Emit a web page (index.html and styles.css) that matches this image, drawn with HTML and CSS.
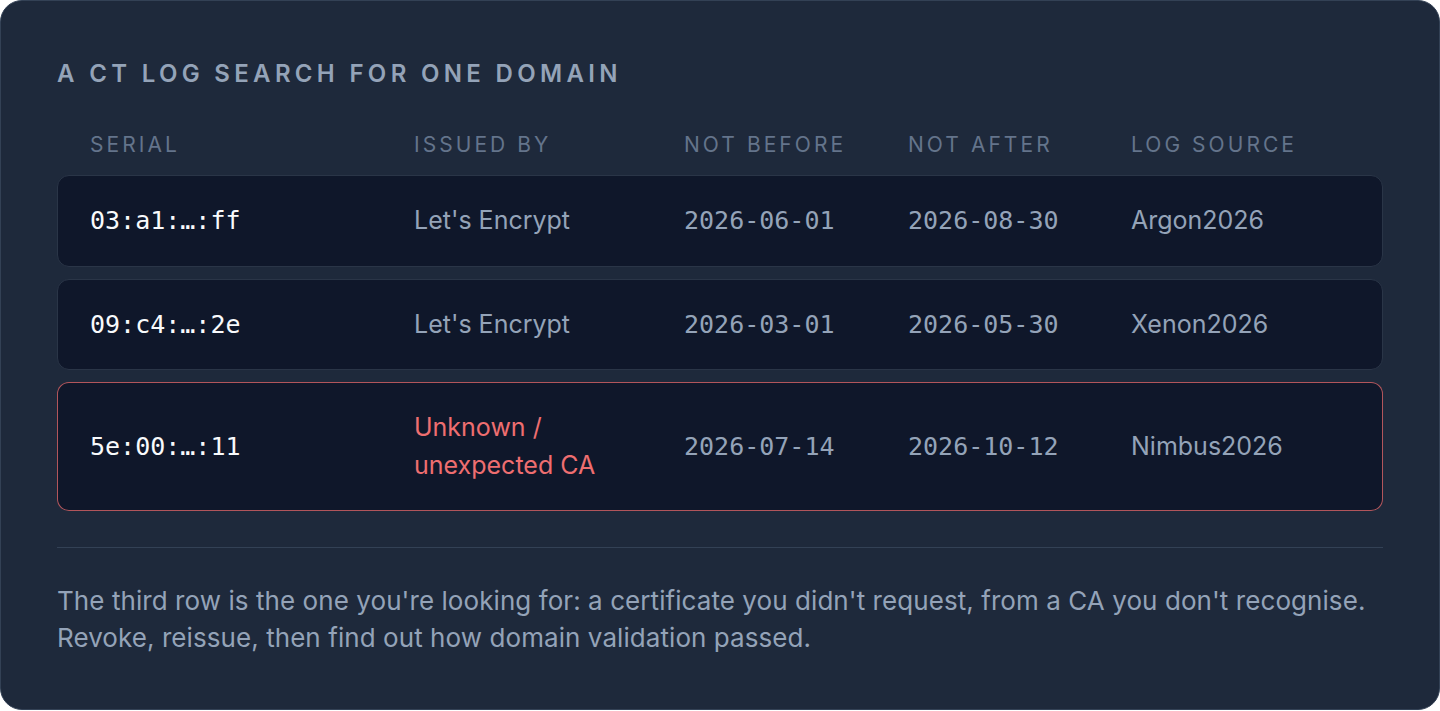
FILE: index.html
```html
<!DOCTYPE html>
<html>
<head>
  <meta charset="UTF-8">
  <title>CT log search</title>
  <link rel="stylesheet" href="styles.css">
</head>
<body>
  <div class="card">
    <h2 class="title">A CT log search for one domain</h2>

    <div class="table">
      <div class="head">
        <span>Serial</span>
        <span>Issued by</span>
        <span>Not before</span>
        <span>Not after</span>
        <span>Log source</span>
      </div>

      <div class="row">
        <span class="serial">03:a1:…:ff</span>
        <span class="issuer">Let's Encrypt</span>
        <span class="date">2026-06-01</span>
        <span class="date">2026-08-30</span>
        <span class="log">Argon2026</span>
      </div>
      <div class="row">
        <span class="serial">09:c4:…:2e</span>
        <span class="issuer">Let's Encrypt</span>
        <span class="date">2026-03-01</span>
        <span class="date">2026-05-30</span>
        <span class="log">Xenon2026</span>
      </div>
      <div class="row suspect">
        <span class="serial">5e:00:…:11</span>
        <span class="issuer">Unknown /<br>unexpected CA</span>
        <span class="date">2026-07-14</span>
        <span class="date">2026-10-12</span>
        <span class="log">Nimbus2026</span>
      </div>
    </div>

    <p class="note">The third row is the one you're looking for: a certificate you didn't request, from a CA you don't recognise. Revoke, reissue, then find out how domain validation passed.</p>
  </div>
</body>
</html>
```

FILE: styles.css
```css
body {
  margin: 0;
  background-color: #ffffff;
  font-family: Inter, 'Noto Sans', sans-serif;
}
.card {
  background-color: #1e293b;
  border: 1px solid #334155;
  border-radius: 22px;
  padding: 58px 56px 53px;
}
.title {
  margin: 0 0 42px 0;
  font-size: 24px;
  font-weight: 600;
  line-height: 29px;
  letter-spacing: 0.18em;
  text-transform: uppercase;
  color: #94a3b8;
}
.table {
  display: flex;
  flex-direction: column;
  gap: 12px;
  padding-bottom: 36px;
  border-bottom: 1px solid #334155;
}
.head,
.row {
  display: grid;
  grid-template-columns: 324px 270px 224px 223px 1fr;
  align-items: center;
}
.head {
  padding: 0 33px 3px;
  font-size: 21px;
  line-height: 30px;
  letter-spacing: 0.145em;
  text-transform: uppercase;
  color: #64748b;
}
.row {
  padding: 26px 32px;
  background-color: #0f172a;
  border: 1px solid #2a3547;
  border-radius: 12px;
  font-size: 25px;
  line-height: 37.5px;
  color: #94a3b8;
}
.serial,
.date {
  font-family: 'DejaVu Sans Mono', 'Liberation Mono', monospace;
}
.serial {
  color: #f8fafc;
}
.suspect {
  border-color: rgba(248, 113, 113, 0.7);
}
.suspect .issuer {
  color: #ee6e70;
}
.note {
  margin: 34px 0 0 0;
  font-size: 26px;
  line-height: 37px;
  letter-spacing: 0.07px;
  color: #94a3b8;
}
```
